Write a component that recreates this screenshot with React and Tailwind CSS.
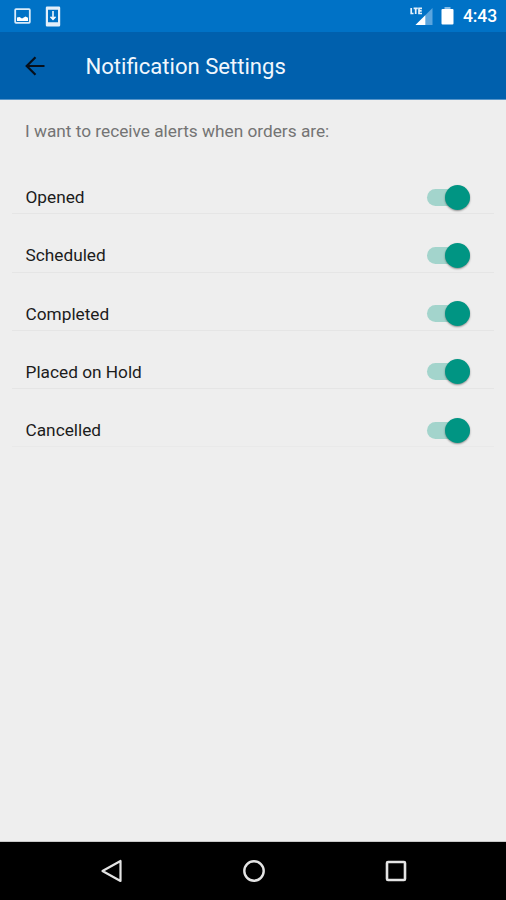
import { useState } from 'react';

const ALERTS = ['Opened', 'Scheduled', 'Completed', 'Placed on Hold', 'Cancelled'];

function StatusBar() {
    return (
        <div className="h-8 bg-[#0072c6] flex items-center justify-between pl-[14px] pr-[9px] text-white">
            <div className="flex items-center gap-[14px]">
                {/* Screenshot notification */}
                <svg className="w-[17px] h-4" viewBox="0 0 17 16" fill="none">
                    <rect x="1.2" y="1.2" width="14.6" height="13.6" rx="0.8" stroke="#d9ebfa" strokeWidth="1.8" />
                    <path d="M3 13V9.600L5.500 9l2.500 1.600 3.500-2L14 9.800V13z" fill="#fff" />
                </svg>
                {/* Download notification */}
                <svg className="w-4 h-[21px]" viewBox="0 0 15 21">
                    <path fillRule="evenodd" d="M1.500 0.500h12q1.200 0 1.200 1.200v17.600q0 1.200-1.200 1.200h-12q-1.200 0-1.200-1.200V1.700q0-1.200 1.200-1.200zM2.500 3.700v12.600h10V3.700z" fill="#e3effa" />
                    <path d="M7.500 5v8M5 10.800l2.500 2.700L10 10.800" fill="none" stroke="#fff" strokeWidth="1.500" />
                </svg>
            </div>
            <div className="flex items-center">
                {/* LTE signal */}
                <svg className="w-[23px] h-[19px]" viewBox="0 0 23 19">
                    <path d="M22.500 1v17H5.500z" fill="#5ba5de" />
                    <path d="M15.300 8.200V18H5.500z" fill="#fff" />
                    <path d="M1.200 1v5.500h2.300M3.600 1.300h4.200M5.700 1.300v5.700M12 1.300H9v5.200h3M9 3.900h2.700" fill="none" stroke="#e6f1fb" strokeWidth="1.700" />
                </svg>
                <svg className="w-[13px] h-[18px] ml-[8px] mr-px" viewBox="0 0 13 18">
                    <path d="M3.500 0h6v2.500h-6z" fill="#86bde8" />
                    <rect x="0.500" y="2" width="12" height="15.500" rx="1" fill="#fff" />
                </svg>
                <span className="ml-[8px] pt-[2px] text-[17.5px] leading-none font-medium tracking-[-0.1px]">4:43</span>
            </div>
        </div>
    );
}

function Toggle({ on, onClick, label }) {
    return (
        <button
            role="switch"
            aria-checked={on}
            aria-label={label}
            onClick={onClick}
            className={`w-[43px] h-[17px] rounded-full flex items-center ${on ? 'justify-end bg-[#a3d4cc]' : 'justify-start bg-gray-400'}`}
        >
            <span className={`w-[25px] h-[25px] shrink-0 rounded-full shadow-[0_1px_2px_rgba(0,0,0,0.4)] ${on ? 'bg-[#009583]' : 'bg-gray-100'}`} />
        </button>
    );
}

export default function App() {
    const [enabled, setEnabled] = useState(ALERTS);

    const toggle = (name) =>
        setEnabled((prev) => (prev.includes(name) ? prev.filter((n) => n !== name) : [...prev, name]));

    return (
        <div className="w-[506px] h-[900px] flex flex-col bg-[#eeeeee] overflow-hidden font-['Roboto',sans-serif]">
            <StatusBar />

            {/* App bar */}
            <header className="h-[68px] bg-[#0060ad] border-b border-[#5795c9] flex items-center pl-[25px]">
                <button aria-label="Back">
                    <svg className="w-5 h-5" viewBox="0 0 20 20" fill="none" stroke="#06101c" strokeWidth="2.200">
                        <path d="M19.500 10H2M10.500 1.200L1.700 10l8.800 8.800" />
                    </svg>
                </button>
                <h1 className="ml-[40.500px] pt-[2px] text-[22.1px] leading-none text-[#f1f7fd] whitespace-nowrap">Notification Settings</h1>
            </header>

            <main className="flex-1 border-b border-[#c8c8c8]">
                <p className="h-[56px] pt-[19px] pl-[25px] text-[17.25px] leading-6 text-[#747474]">
                    I want to receive alerts when orders are:
                </p>
                <ul className="px-3">
                    {ALERTS.map((name) => (
                        <li
                            key={name}
                            className="h-[58.3px] pt-[24px] pl-[13.5px] pr-[24.5px] flex items-start justify-between border-b border-[#e5e5e5] last:border-[#e9e9e9]"
                        >
                            <span className="text-[17.25px] leading-[34px] text-[#1c1c1c]">{name}</span>
                            <div className="h-[34px] flex items-center">
                                <Toggle on={enabled.includes(name)} onClick={() => toggle(name)} label={name} />
                            </div>
                        </li>
                    ))}
                </ul>
            </main>

            {/* System navigation */}
            <nav className="h-[58px] bg-black flex items-center justify-between pl-[100px] pr-[99px]">
                <svg className="w-[23px] h-6" viewBox="0 0 23 24" fill="none" stroke="#e4e4e4" strokeWidth="2.200">
                    <path d="M20.500 2v20L2.500 12z" strokeLinejoin="round" />
                </svg>
                <svg className="w-6 h-6" viewBox="0 0 24 24" fill="none" stroke="#e4e4e4" strokeWidth="2.400">
                    <circle cx="12" cy="12" r="9.700" />
                </svg>
                <svg className="w-[22px] h-[22px]" viewBox="0 0 22 22" fill="none" stroke="#e4e4e4" strokeWidth="2.600">
                    <rect x="2" y="2" width="18" height="18" rx="1" />
                </svg>
            </nav>
        </div>
    );
}
